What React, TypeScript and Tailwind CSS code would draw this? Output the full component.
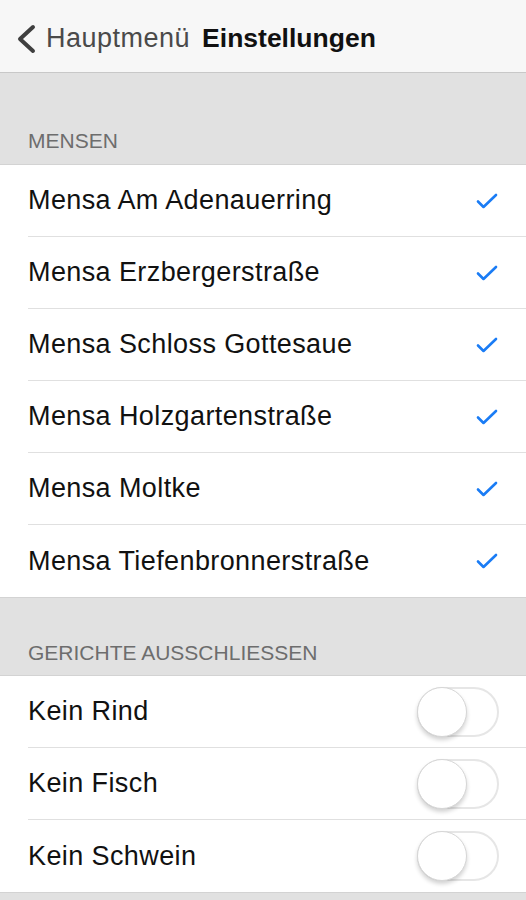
import React from "react";

const mensen = [
  "Mensa Am Adenauerring",
  "Mensa Erzbergerstraße",
  "Mensa Schloss Gottesaue",
  "Mensa Holzgartenstraße",
  "Mensa Moltke",
  "Mensa Tiefenbronnerstraße",
];

const gerichte = ["Kein Rind", "Kein Fisch", "Kein Schwein"];

function Check() {
  return (
    <svg width="22" height="16" viewBox="0 0 22 16" fill="none">
      <path d="M2 8.5 L7.5 14 L20 2" stroke="#1a7cf5" strokeWidth="2.6" strokeLinecap="round" strokeLinejoin="round" />
    </svg>
  );
}

function Toggle() {
  return (
    <div className="relative h-[50px] w-[82px] rounded-full border-[2px] border-[#e6e6e6] bg-white">
      <div className="absolute left-[-2px] top-[-2px] h-[50px] w-[50px] rounded-full border border-[#d6d6d6] bg-white shadow-[0_3px_4px_rgba(0,0,0,0.18)]" />
    </div>
  );
}

export default function App() {
  return (
    <div className="flex h-[900px] w-[526px] flex-col overflow-hidden bg-[#e1e1e1]" style={{ fontFamily: '"Liberation Sans", Arial, sans-serif' }}>
      <div className="flex h-[73px] shrink-0 items-center border-b border-[#c8c8c8] bg-[#f7f7f7] pl-[14px] pt-[5px]">
        <svg width="24" height="32" viewBox="0 0 24 32" fill="none" className="mr-[8px]">
          <path d="M19 4 L6 16 L19 28" stroke="#3f3f3f" strokeWidth="4" strokeLinecap="round" strokeLinejoin="round" />
        </svg>
        <span className="text-[27px] tracking-[0.5px] text-[#4a4a4a]">Hauptmenü</span>
        <span className="ml-[12px] text-[26.5px] font-bold text-[#111]">Einstellungen</span>
      </div>

      <div className="flex h-[92px] shrink-0 items-end border-b border-[#d3d3d3] pb-[8px] pl-[28px]">
        <span className="text-[21px] text-[#6d6d6d]">MENSEN</span>
      </div>
      <div className="shrink-0 bg-white">
        {mensen.map((m, i) => (
          <div key={m} className="pl-[28px]">
            <div className={`flex h-[72px] items-center pr-[28px] ${i < mensen.length - 1 ? "border-b border-[#e0e0e0]" : ""}`}>
              <span className="flex-1 text-[27px] tracking-[0.4px] text-[#111]">{m}</span>
              <Check />
            </div>
          </div>
        ))}
      </div>

      <div className="flex h-[79px] shrink-0 items-end border-y border-[#d3d3d3] pb-[7px] pl-[28px]">
        <span className="text-[21px] text-[#6d6d6d]">GERICHTE AUSSCHLIESSEN</span>
      </div>
      <div className="shrink-0 border-b border-[#d3d3d3] bg-white">
        {gerichte.map((g, i) => (
          <div key={g} className="pl-[28px]">
            <div className={`flex h-[72px] items-center pr-[27px] ${i < gerichte.length - 1 ? "border-b border-[#e0e0e0]" : ""}`}>
              <span className="flex-1 text-[27px] tracking-[0.4px] text-[#111]">{g}</span>
              <Toggle />
            </div>
          </div>
        ))}
      </div>
    </div>
  );
}
